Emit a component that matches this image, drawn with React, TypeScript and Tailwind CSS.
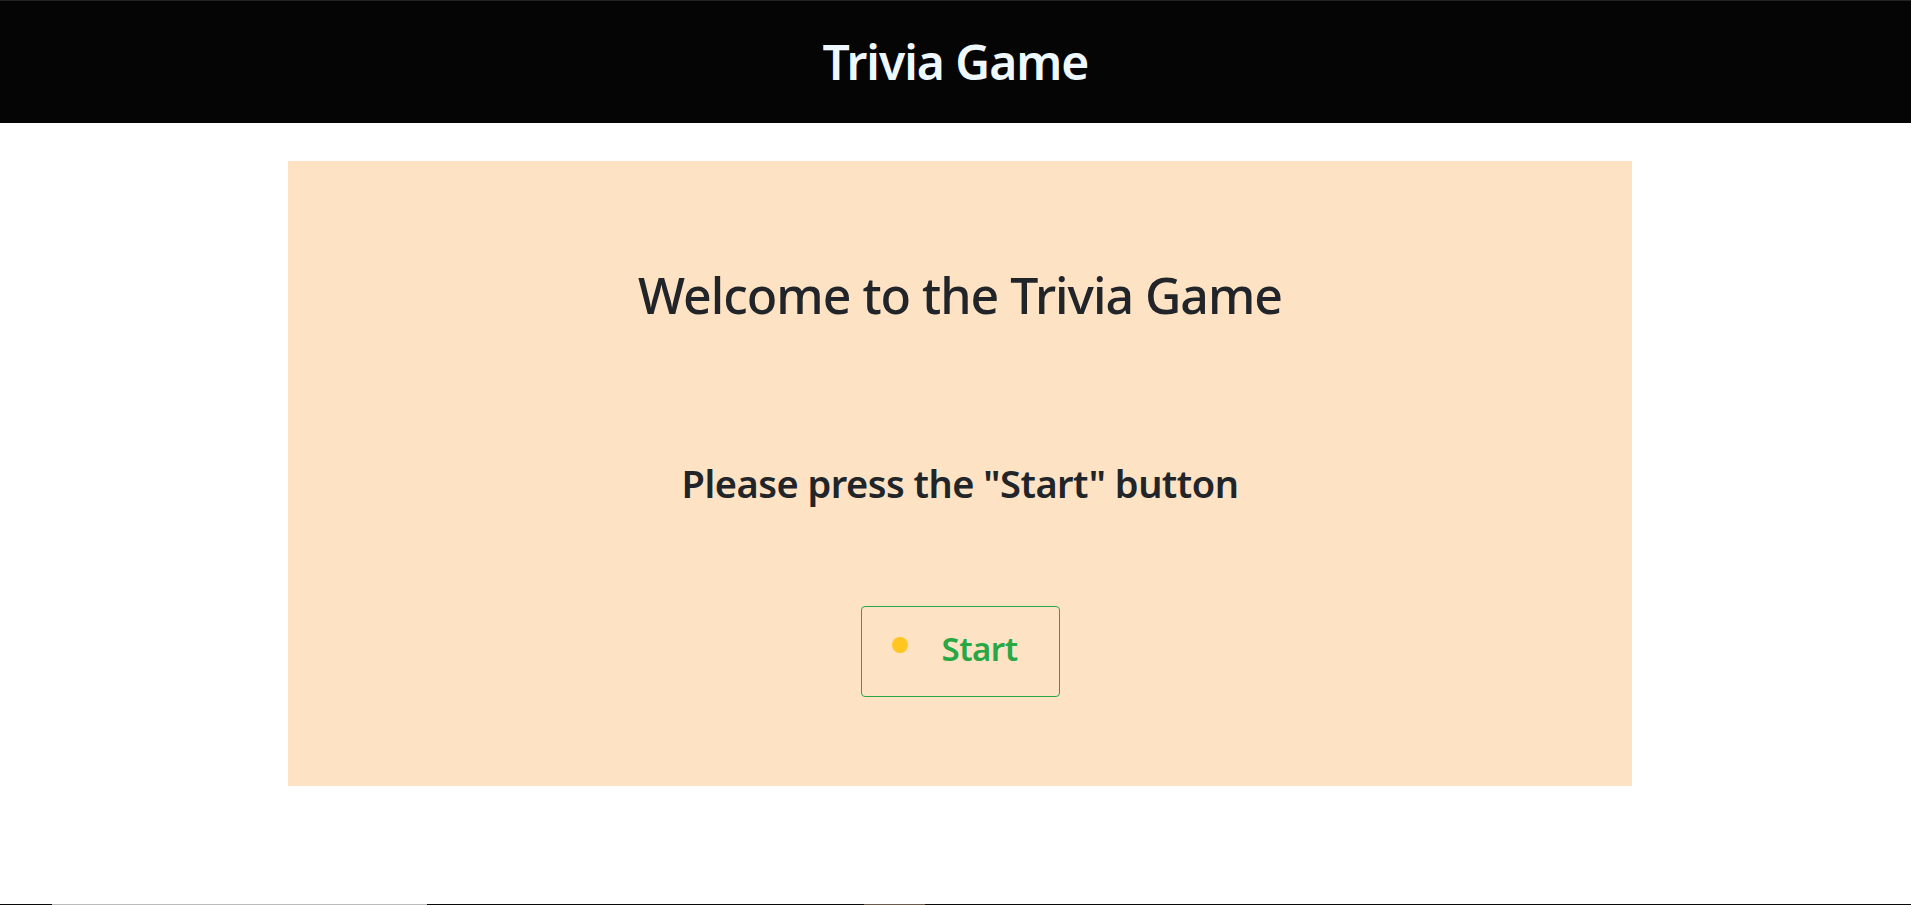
import React from "react";

function Header() {
    return (
        <header className="h-[123px] bg-[#050505] flex items-center justify-center border-t border-[#222]">
            <h1 className="text-[48px] leading-none font-semibold tracking-[-1px] text-[#f0f8ff]">Trivia Game</h1>
        </header>
    );
}

function StartButton() {
    return (
        <button className="w-[199px] h-[91px] border border-[#28a745] rounded-[4px] flex items-start pt-[25px] pl-[30px]">
            <span className="mt-[5px] w-[16px] h-[16px] rounded-full bg-[#ffc520]" />
            <span className="ml-[34px] text-[33px] leading-none font-semibold tracking-[-0.5px] text-[#28a745]">Start</span>
        </button>
    );
}

export default function App() {
    return (
        <div className="h-[905px] overflow-hidden bg-white flex flex-col font-['Noto_Sans',sans-serif]">
            <Header />

            <main className="flex-1 flex flex-col">
                <section className="mt-[38px] ml-[288px] w-[1344px] h-[625px] bg-[#fde2c3] flex flex-col items-center text-[#212529]">
                    <h2 className="mt-[104px] text-[50px] leading-[1.2] font-medium tracking-[-1px]">Welcome to the Trivia Game</h2>
                    <p className="mt-[136px] text-[38px] leading-[1.2] font-semibold tracking-[-0.5px]">Please press the "Start" button</p>
                    <div className="mt-[99px]">
                        <StartButton />
                    </div>
                </section>
            </main>

            {/* top edge of whatever sits below the fold */}
            <div className="h-px flex">
                <div className="w-[52px] bg-[#0a0a0a]" />
                <div className="w-[375px] bg-[#bbbbbb]" />
                <div className="w-[437px] bg-[#0a0a0a]" />
                <div className="w-[61px] bg-[#6b5a4a]" />
                <div className="flex-1 bg-[#0a0a0a]" />
            </div>
        </div>
    );
}
